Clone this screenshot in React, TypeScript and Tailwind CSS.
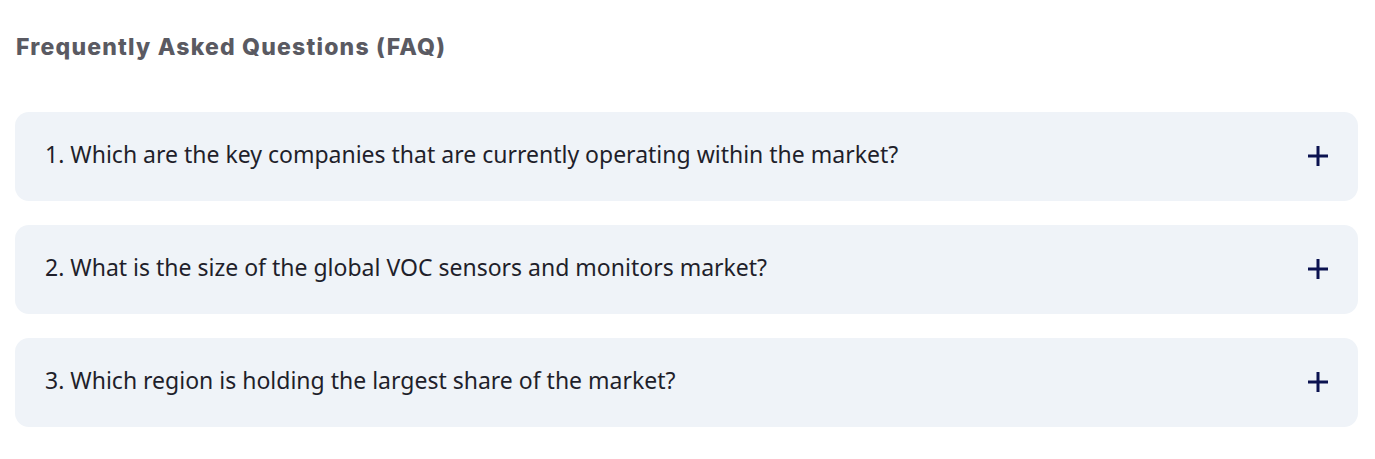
import React from 'react';

const questions = [
  '1. Which are the key companies that are currently operating within the market?',
  '2. What is the size of the global VOC sensors and monitors market?',
  '3. Which region is holding the largest share of the market?',
];

const PlusIcon = () => (
  <svg width="22" height="22" viewBox="0 0 22 22" className="shrink-0 mt-[4px]">
    <path d="M11 1v20M1 11h20" stroke="#0b1250" strokeWidth="3" />
  </svg>
);

export default function App() {
  return (
    <div className="bg-white w-[1375px] h-[459px] px-[15px] pt-[32px]">
      {/* Section title */}
      <h2 className="font-['Inter','Open_Sans',sans-serif] text-[23px] font-extrabold tracking-[1.2px] text-[#5a5a62] pl-px leading-[30px]">
        Frequently Asked Questions (FAQ)
      </h2>

      {/* FAQ items */}
      <div className="mt-[50px] w-[1343px] flex flex-col gap-6">
        {questions.map((q) => (
          <div
            key={q}
            className="h-[89px] rounded-[14px] bg-[#eff3f8] flex items-center justify-between pl-[30px] pr-[29px] pb-[5px]"
          >
            <span className="font-['Noto_Sans',sans-serif] text-[23px] leading-[30px] text-[#1f1f2b]">
              {q}
            </span>
            <PlusIcon />
          </div>
        ))}
      </div>
    </div>
  );
}
